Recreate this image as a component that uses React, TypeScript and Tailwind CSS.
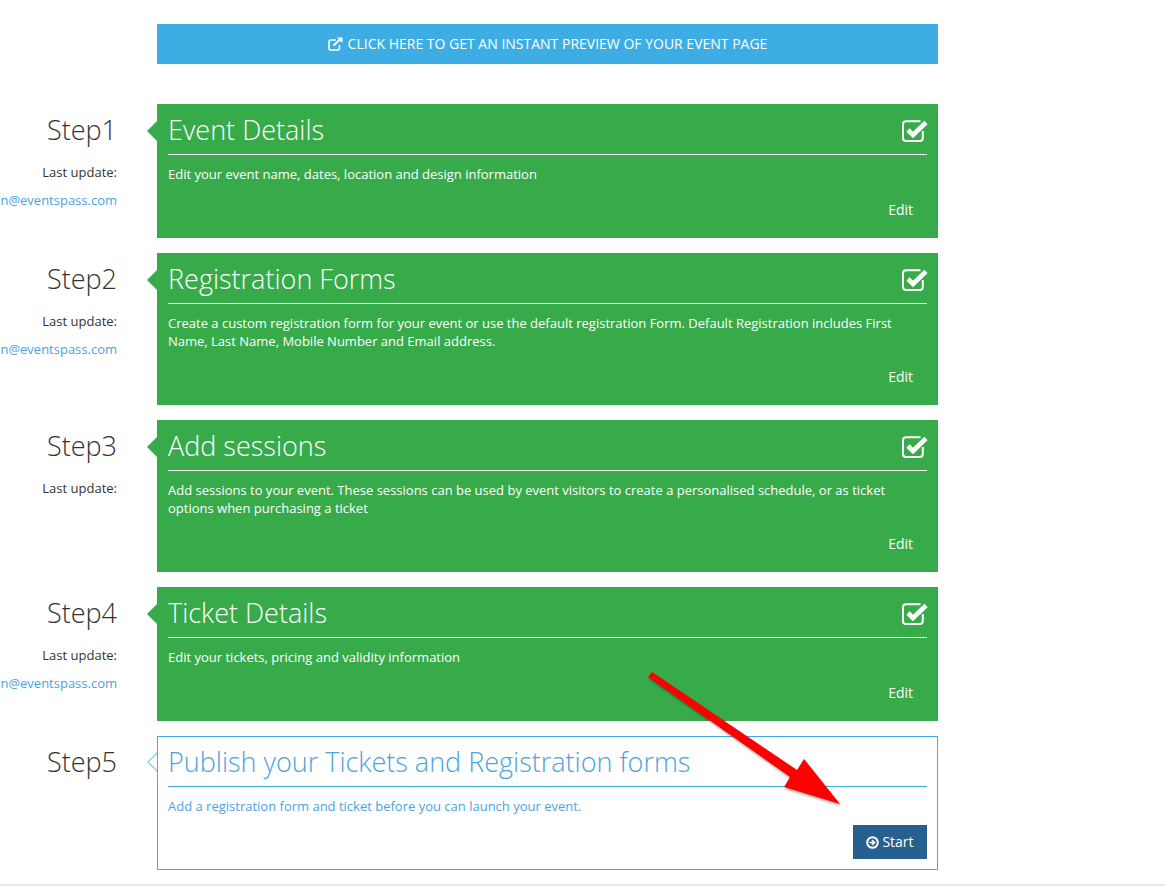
import React from 'react';

type Step = {
  label: string;
  title: string;
  text: string[];
  email?: string;
  height: string;
};

const steps: Step[] = [
  {
    label: 'Step1',
    title: 'Event Details',
    text: ['Edit your event name, dates, location and design information'],
    email: 'n@eventspass.com',
    height: 'h-[134px]',
  },
  {
    label: 'Step2',
    title: 'Registration Forms',
    text: [
      'Create a custom registration form for your event or use the default registration Form. Default Registration includes First',
      'Name, Last Name, Mobile Number and Email address.',
    ],
    email: 'n@eventspass.com',
    height: 'h-[152px]',
  },
  {
    label: 'Step3',
    title: 'Add sessions',
    text: [
      'Add sessions to your event. These sessions can be used by event visitors to create a personalised schedule, or as ticket',
      'options when purchasing a ticket',
    ],
    height: 'h-[152px]',
  },
  {
    label: 'Step4',
    title: 'Ticket Details',
    text: ['Edit your tickets, pricing and validity information'],
    email: 'n@eventspass.com',
    height: 'h-[134px]',
  },
];

const CheckIcon = () => (
  <svg className="mt-[3px] mr-[-1px]" width="26" height="23" viewBox="0 0 26 23" fill="none">
    <path d="M20.8 12v7a3 3 0 0 1-3 3H4a3 3 0 0 1-3-3V5.2a3 3 0 0 1 3-3h14.5" stroke="white" strokeWidth="2" />
    <path d="M6 11 L11 16 L24 3.5" stroke="white" strokeWidth="4.6" />
  </svg>
);

const StepSide = ({ label, email, noUpdate }: { label: string; email?: string; noUpdate?: boolean }) => (
  <div className="w-[117px] mr-[40px] shrink-0 flex flex-col items-end whitespace-nowrap">
    <div className="text-[27px] leading-[36px] font-light text-[#333] mt-[8px]">{label}</div>
    {!noUpdate && <div className="text-[13px] leading-[18px] text-[#333] mt-[15px]">Last update:</div>}
    {email && <div className="text-[13px] leading-[18px] text-[#4ba3df] mt-[10px]">{email}</div>}
  </div>
);

export default function App() {
  return (
    <div className="relative h-[886px] w-[1165px] overflow-hidden bg-white font-['Open_Sans',sans-serif]">
      <div className="pt-[24px] pl-[157px]">
        <div className="w-[781px] h-[40px] bg-[#3eade3] flex items-center justify-center gap-[5px] text-white text-[14px]">
          <svg width="15" height="14" viewBox="0 0 15 14" fill="none">
            <path d="M11.5 8v3.2a1.8 1.8 0 0 1-1.8 1.8H2.8A1.8 1.8 0 0 1 1 11.2V4.8A1.8 1.8 0 0 1 2.8 3H8" stroke="white" strokeWidth="1.6" />
            <path d="M5.5 8.5 L12 2.5" stroke="white" strokeWidth="2" />
            <path d="M8.8 0.5 H14.5 V6 Z" fill="white" />
          </svg>
          <span className="-mt-[1px]">CLICK HERE TO GET AN INSTANT PREVIEW OF YOUR EVENT PAGE</span>
        </div>
      </div>

      <div className="mt-[40px] flex flex-col gap-[15px]">
        {steps.map((step) => (
          <div key={step.label} className="flex">
            <StepSide label={step.label} email={step.email} />
            <div className={`relative w-[781px] ${step.height} bg-[#37aa4a] text-white px-[11px] flex flex-col`}>
              <div className="absolute left-[-10px] top-[17px] w-0 h-0 border-y-[10px] border-y-transparent border-r-[10px] border-r-[#37aa4a]" />
              <div className="h-[51px] border-b border-white flex items-center justify-between">
                <div className="text-[27px] font-light leading-[36px] mt-[2px]">{step.title}</div>
                <CheckIcon />
              </div>
              <div className="mt-[10px] text-[13px] leading-[18px]">
                {step.text.map((line) => (
                  <div key={line} className="whitespace-nowrap">{line}</div>
                ))}
              </div>
              <div className="mt-auto mb-[19px] text-right text-[14px] leading-[19px] pr-[14px]">Edit</div>
            </div>
          </div>
        ))}

        <div className="flex">
          <StepSide label="Step5" noUpdate />
          <div className="relative w-[781px] h-[134px] border border-[#3eade3] px-[10px] flex flex-col">
            <div className="absolute left-[-11px] top-[15px] w-0 h-0 border-y-[10px] border-y-transparent border-r-[10px] border-r-[#8fd0ef]" />
            <div className="absolute left-[-9px] top-[17px] w-0 h-0 border-y-[8px] border-y-transparent border-r-[8px] border-r-white" />
            <div className="h-[50px] border-b border-[#3eade3] flex items-center">
              <div className="text-[27px] font-light leading-[36px] mt-[1px] text-[#4ba3df]">Publish your Tickets and Registration forms</div>
            </div>
            <div className="mt-[10px] text-[13px] leading-[18px] text-[#4ba3df]">Add a registration form and ticket before you can launch your event.</div>
            <div className="mt-auto mb-[10px] self-end w-[74px] h-[34px] bg-[#25608f] text-white text-[14px] flex items-center justify-center gap-[3px]">
              <svg width="13" height="13" viewBox="0 0 13 13" fill="none">
                <circle cx="6.5" cy="6.5" r="5.3" stroke="white" strokeWidth="2" />
                <path d="M3.5 6.5 H8 M6 4 L8.6 6.5 L6 9" stroke="white" strokeWidth="1.6" />
              </svg>
              <span className="-mt-[1px]">Start</span>
            </div>
          </div>
        </div>
      </div>

      <div className="absolute left-0 right-0 top-[884px] h-[2px] bg-[#e8e8e8]" />

      {/* red annotation arrow drawn over the page */}
      <svg className="absolute left-0 top-0 pointer-events-none drop-shadow-[1px_2px_1px_rgba(0,0,0,0.35)]" width="1165" height="886" viewBox="0 0 1165 886">
        <polygon points="652,672 797,770 804,759 840,804 784,787 790,777 648,677" fill="#ff0000" />
      </svg>
    </div>
  );
}
